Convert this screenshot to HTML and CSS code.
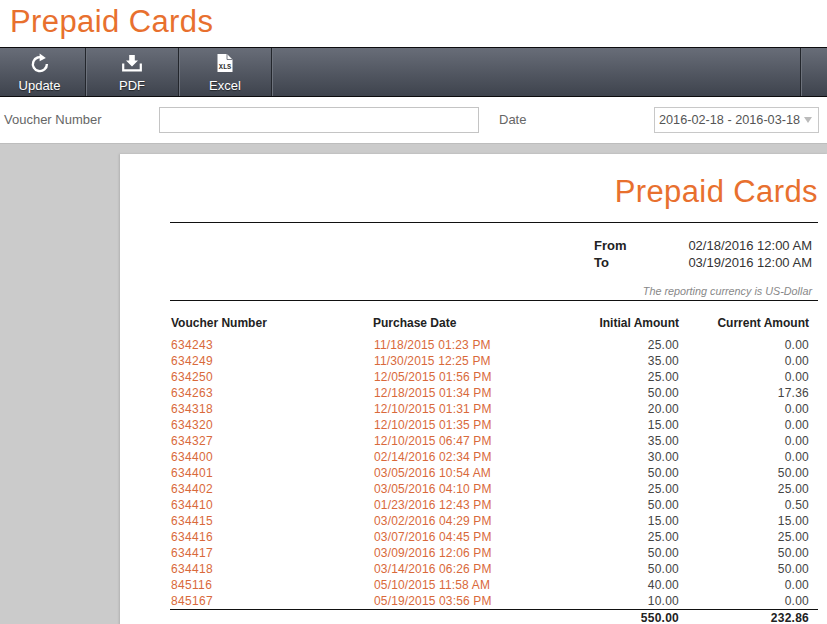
FILE: index.html
```html
<!DOCTYPE html>
<html lang="en">
<head>
<meta charset="utf-8">
<title>Prepaid Cards</title>
<link rel="stylesheet" href="styles.css">
</head>
<body>
<header class="title-bar"><h1 class="title">Prepaid Cards</h1></header>
<nav class="toolbar">
  <button class="tool tool-update">
    <svg class="icon" width="20" height="20" viewBox="0 0 20 20"><path d="M13.6 5.2A7 7 0 1 0 16.9 11" fill="none" stroke="#fff" stroke-width="2.4"/><path d="M9.6 0.6 15.8 5 9.6 8.2Z" fill="#fff"/></svg>
    <span>Update</span>
  </button>
  <button class="tool tool-pdf">
    <svg class="icon" width="20" height="20" viewBox="0 0 20 20"><path d="M7.2 2h5.6v5.5h3.2L10 13.4 4 7.5h3.2Z" fill="#fff"/><path d="M1.2 10.5v6.8h17.6v-6.8" fill="none" stroke="#fff" stroke-width="2.2"/></svg>
    <span>PDF</span>
  </button>
  <button class="tool tool-excel">
    <svg class="icon" width="20" height="20" viewBox="0 0 20 20"><path d="M2.500 1h9.500l5.500 5.500V19H2.500Z" fill="#fff"/><path d="M12 1v5.500h5.500" fill="none" stroke="#555b66" stroke-width=".8"/><text x="10" y="15.600" class="xls">XLS</text></svg>
    <span>Excel</span>
  </button>
  <div class="tool-fill"></div>
  <div class="tool-end"></div>
</nav>
<form class="filters">
  <label class="filter-label voucher-label">Voucher Number</label>
  <input class="voucher-input" type="text">
  <label class="filter-label date-label">Date</label>
  <div class="date-select"><span>2016-02-18 - 2016-03-18</span><i class="caret"></i></div>
</form>
<main class="viewer">
  <section class="sheet">
    <h2 class="report-title">Prepaid Cards</h2>
    <div class="range">
      <div class="range-row"><b>From</b><span>02/18/2016 12:00 AM</span></div>
      <div class="range-row"><b>To</b><span>03/19/2016 12:00 AM</span></div>
    </div>
    <p class="currency">The reporting currency is US-Dollar</p>
    <table class="report">
      <thead>
        <tr><th class="c1">Voucher Number</th><th class="c2">Purchase Date</th><th class="num c3">Initial Amount</th><th class="num c4">Current Amount</th></tr>
      </thead>
      <tbody>
        <tr><td class="link">634243</td><td class="link d">11/18/2015 01:23 PM</td><td class="num">25.00</td><td class="num">0.00</td></tr>
        <tr><td class="link">634249</td><td class="link d">11/30/2015 12:25 PM</td><td class="num">35.00</td><td class="num">0.00</td></tr>
        <tr><td class="link">634250</td><td class="link d">12/05/2015 01:56 PM</td><td class="num">25.00</td><td class="num">0.00</td></tr>
        <tr><td class="link">634263</td><td class="link d">12/18/2015 01:34 PM</td><td class="num">50.00</td><td class="num">17.36</td></tr>
        <tr><td class="link">634318</td><td class="link d">12/10/2015 01:31 PM</td><td class="num">20.00</td><td class="num">0.00</td></tr>
        <tr><td class="link">634320</td><td class="link d">12/10/2015 01:35 PM</td><td class="num">15.00</td><td class="num">0.00</td></tr>
        <tr><td class="link">634327</td><td class="link d">12/10/2015 06:47 PM</td><td class="num">35.00</td><td class="num">0.00</td></tr>
        <tr><td class="link">634400</td><td class="link d">02/14/2016 02:34 PM</td><td class="num">30.00</td><td class="num">0.00</td></tr>
        <tr><td class="link">634401</td><td class="link d">03/05/2016 10:54 AM</td><td class="num">50.00</td><td class="num">50.00</td></tr>
        <tr><td class="link">634402</td><td class="link d">03/05/2016 04:10 PM</td><td class="num">25.00</td><td class="num">25.00</td></tr>
        <tr><td class="link">634410</td><td class="link d">01/23/2016 12:43 PM</td><td class="num">50.00</td><td class="num">0.50</td></tr>
        <tr><td class="link">634415</td><td class="link d">03/02/2016 04:29 PM</td><td class="num">15.00</td><td class="num">15.00</td></tr>
        <tr><td class="link">634416</td><td class="link d">03/07/2016 04:45 PM</td><td class="num">25.00</td><td class="num">25.00</td></tr>
        <tr><td class="link">634417</td><td class="link d">03/09/2016 12:06 PM</td><td class="num">50.00</td><td class="num">50.00</td></tr>
        <tr><td class="link">634418</td><td class="link d">03/14/2016 06:26 PM</td><td class="num">50.00</td><td class="num">50.00</td></tr>
        <tr><td class="link">845116</td><td class="link d">05/10/2015 11:58 AM</td><td class="num">40.00</td><td class="num">0.00</td></tr>
        <tr><td class="link">845167</td><td class="link d">05/19/2015 03:56 PM</td><td class="num">10.00</td><td class="num">0.00</td></tr>
      </tbody>
      <tfoot>
        <tr><td></td><td></td><td class="num">550.00</td><td class="num">232.86</td></tr>
      </tfoot>
    </table>
  </section>
</main>
</body>
</html>
```
FILE: styles.css
```css
html, body { margin: 0; padding: 0; height: 100%; overflow: hidden; }
body { font-family: "Liberation Sans", Arial, sans-serif; background: #fff; color: #222; }

.title-bar { height: 47px; box-sizing: border-box; padding: 4px 0 0 10px; }
.title { margin: 0; font-size: 31px; line-height: 36px; font-weight: 400; color: #e8702e; letter-spacing: 0.4px; }

.toolbar {
  display: flex; height: 50px; box-sizing: border-box;
  border-top: 1px solid #0c0c0e; border-bottom: 1px solid #0c0c0e;
  background: linear-gradient(#686d78, #3e434d);
}
.tool {
  display: flex; flex-direction: column; align-items: center; box-sizing: border-box;
  margin: 0; padding: 5px 0 0; border: 0; background: none; color: #fff;
  border-right: 1px solid #23262c; box-shadow: 1px 0 0 #6d727c;
  font: 13px/16px "Liberation Sans", Arial, sans-serif;
  text-shadow: 0 1px 1px rgba(0, 0, 0, 0.5);
}
.tool span { margin-top: 5px; }
.icon { display: block; }
.tool-update { width: 86px; padding-right: 6px; }
.tool-pdf { width: 93px; }
.tool-excel { width: 93px; }
.tool-fill { width: 528px; border-right: 1px solid #23262c; box-shadow: 1px 0 0 #6d727c; }
.xls { font: bold 7px "Liberation Mono", monospace; fill: #333; text-anchor: middle; text-shadow: none; }

.filters { display: flex; align-items: center; height: 46px; font-size: 13px; }
.filter-label { color: #666; line-height: 16px; }
.voucher-label { width: 155px; margin-left: 4px; }
.voucher-input { width: 320px; height: 26px; box-sizing: border-box; margin: 0; border: 1px solid #c4c4c4; background: #fff; }
.date-label { width: 155px; margin-left: 20px; }
.date-select {
  display: flex; align-items: center; box-sizing: border-box; width: 165px; height: 26px;
  padding-left: 4px; border: 1px solid #c8c8c8; color: #555; font-size: 12.7px;
}
.caret { width: 0; height: 0; margin-left: 4px; border: 4px solid transparent; border-top: 6px solid #bbb; border-bottom: 0; }

.viewer { height: 481px; box-sizing: border-box; padding: 10px 0 0 120px; background: #cbcbcb; border-top: 1px solid #bdbdbd; overflow: hidden; }
.sheet { height: 480px; box-sizing: border-box; padding: 20px 9px 0 50px; background: #fff; box-shadow: -1px 0 2px #b0b0b0; }
.report-title {
  margin: 0; padding-bottom: 12px; border-bottom: 1px solid #111; text-align: right;
  font-size: 31px; line-height: 36px; font-weight: 400; color: #e8702e; letter-spacing: 0.4px;
}
.range { padding: 14px 6px 0 424px; font-size: 13px; line-height: 17px; color: #333; }
.range-row { display: flex; justify-content: space-between; }
.range-row b { color: #222; }
.currency {
  margin: 0; padding: 14px 6px 3px 0; border-bottom: 1px solid #111; text-align: right;
  font-size: 10.8px; line-height: 12px; font-style: italic; color: #888;
}
.report { width: 648px; margin-top: 8px; border-collapse: collapse; table-layout: fixed; font-size: 12px; }
.report th { padding: 0 1px; height: 28px; font-weight: 700; text-align: left; color: #222; }
.report td { height: 16px; padding: 0 1px; line-height: 14px; color: #444; letter-spacing: 0.25px; }
.c1 { width: 200px; }
.c2 { width: 199px; }
.c3 { width: 105px; }
.report .num { text-align: right; }
.report .c4 { padding-right: 9px; }
.report td:last-child { padding-right: 9px; }
.report .link { color: #d9693a; letter-spacing: 0.33px; }
.report .d { padding-left: 2px; letter-spacing: 0.15px; }
.report tfoot td { border-top: 1px solid #111; font-weight: 700; color: #222; height: 15px; }
```
